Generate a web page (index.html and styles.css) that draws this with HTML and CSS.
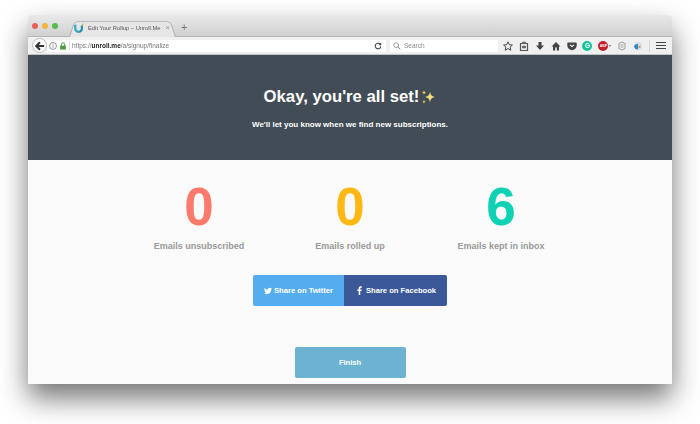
FILE: index.html
```html
<!DOCTYPE html>
<html lang="en">
<head>
      <meta charset="UTF-8">
      <title>Edit Your Rollup - Unroll.Me</title>
      <link rel="stylesheet" href="styles.css">
</head>
<body>
      <div class="window">
            <div class="tabbar">
                  <div class="lights">
                        <span class="light red"></span>
                        <span class="light yellow"></span>
                        <span class="light green"></span>
                  </div>
                  <div class="tab">
                        <svg class="favicon" viewBox="0 0 12 12"><path d="M1.500 2v4.500a4.200 4.200 0 0 0 4.200 4.200" fill="none" stroke="#2fa9c4" stroke-width="2.600"/><path d="M9.500 3v3.500a4 4 0 0 1-3.800 4.200" fill="none" stroke="#1f8fa8" stroke-width="2.600"/><circle cx="10.600" cy="1.600" r="1.100" fill="#f2b632"/></svg>
                        <span class="tab-title">Edit Your Rollup – Unroll.Me</span>
                        <span class="tab-close">×</span>
                  </div>
                  <span class="newtab">+</span>
            </div>
            <div class="toolbar">
                  <div class="back">
                        <svg viewBox="0 0 12 12" width="10" height="10"><path d="M6 1.500 1.500 6 6 10.500M2 6h9" fill="none" stroke="#333" stroke-width="2.400"/></svg>
                  </div>
                  <div class="urlbar">
                        <svg class="ico" viewBox="0 0 10 10" width="8" height="8"><circle cx="5" cy="5" r="4.300" fill="none" stroke="#777"/><path d="M5 4.300v3M5 2.300v1" stroke="#777"/></svg>
                        <svg class="ico" viewBox="0 0 10 10" width="8" height="8"><rect x="1.500" y="4.500" width="7" height="5" fill="#4e9a3c"/><path d="M3 5V3a2 2 0 0 1 4 0v2" fill="none" stroke="#4e9a3c" stroke-width="1.200"/></svg>
                        <span class="sep"></span>
                        <span class="url">https://<b>unroll.me</b>/a/signup/finalize</span>
                        <svg class="reload" viewBox="0 0 10 10" width="8" height="8"><path d="M8.500 5.500a3.500 3.500 0 1 1-1-3" fill="none" stroke="#444" stroke-width="1.400"/><path d="M9 .5v3.500H5.500z" fill="#444"/></svg>
                  </div>
                  <div class="searchbar">
                        <svg viewBox="0 0 10 10" width="8" height="8"><circle cx="4" cy="4" r="3" fill="none" stroke="#888"/><path d="m6.200 6.200 3 3" stroke="#888" stroke-width="1.200"/></svg>
                        <span>Search</span>
                  </div>
                  <div class="tools">
                        <svg viewBox="0 0 10 10" width="10" height="10"><path d="m5 .8 1.300 2.900 3.100.3-2.300 2.100.7 3.100L5 7.600 2.200 9.200l.7-3.100L.6 4l3.100-.3z" fill="none" stroke="#444" stroke-width="1"/></svg>
                        <svg viewBox="0 0 10 10" width="10" height="10"><path d="M1.500 2.500h7v7h-7z" fill="none" stroke="#555" stroke-width="1.200"/><path d="M3.500 2.500V1h3v1.500M3.500 5h3v2h-3z" fill="#777" stroke="#555" stroke-width=".6"/></svg>
                        <svg viewBox="0 0 10 10" width="10" height="10"><path d="M3.500 1h3v3.500H9L5 9 1 4.500h2.500z" fill="#444"/></svg>
                        <svg viewBox="0 0 10 10" width="10" height="10"><path d="M5 1 .5 5.500H2V9.500h2.200V6.500h1.600v3H8V5.500h1.500z" fill="#444"/></svg>
                        <svg viewBox="0 0 10 10" width="10" height="10"><path d="M.8 1.500h8.400a.5.500 0 0 1 .5.500v2.500a4.700 4.700 0 0 1-9.400 0V2a.5.500 0 0 1 .5-.5z" fill="#444"/><path d="M3 3.800 5 5.600l2-1.800" fill="none" stroke="#fff" stroke-width="1.100"/></svg>
                        <span class="grammarly">G</span>
                        <span class="abp"><span class="abp-dot">ABP</span><i class="caret"></i></span>
                        <svg viewBox="0 0 10 10" width="10" height="10"><path d="M2 2.500 5 1l3 1.500v5L5 9 2 7.500z" fill="none" stroke="#a5a5a5" stroke-width="1.100"/><path d="M3.500 4h3M3.500 6h3" stroke="#a5a5a5"/></svg>
                        <svg viewBox="0 0 10 10" width="10" height="10"><circle cx="5" cy="5" r="4" fill="#d6dde3"/><path d="M1 5a4 4 0 0 1 4-2v5.500A4 4 0 0 1 1 5z" fill="#2f86c7"/><circle cx="6.500" cy="6" r="1.100" fill="#d9913a"/></svg>
                        <span class="divider"></span>
                        <span class="burger"><i></i><i></i><i></i></span>
                  </div>
            </div>

            <div class="hero">
                  <h1>Okay, you're all set!
                        <svg class="sparkle" viewBox="0 0 16 16" width="16" height="16"><path d="M10 2.500c.5 3.200 1.300 4.500 4.800 5.500-3.500 1-4.300 2.300-4.800 5.500C9.500 10.300 8.700 9 5.200 8 8.700 7 9.500 5.700 10 2.500z" fill="#f7dc7a"/><path d="M4 1c.2 1.500.7 2 2 2.500-1.300.5-1.800 1-2 2.500-.2-1.500-.7-2-2-2.500 1.300-.5 1.800-1 2-2.500zM4 10.500c.2 1.400.6 1.800 1.800 2.200-1.200.4-1.600.8-1.800 2.300-.2-1.500-.6-1.900-1.800-2.300 1.200-.4 1.600-.8 1.800-2.200z" fill="#f2c84b"/></svg>
                  </h1>
                  <p>We'll let you know when we find new subscriptions.</p>
            </div>

            <div class="content">
                  <div class="stats">
                        <div class="stat">
                              <div class="num coral">0</div>
                              <div class="label">Emails unsubscribed</div>
                        </div>
                        <div class="stat">
                              <div class="num amber">0</div>
                              <div class="label">Emails rolled up</div>
                        </div>
                        <div class="stat">
                              <div class="num teal">6</div>
                              <div class="label">Emails kept in inbox</div>
                        </div>
                  </div>
                  <div class="share">
                        <a class="btn twitter">
                              <svg viewBox="0 0 24 24" width="8" height="8"><path fill="#fff" d="M23.950 4.570a10 10 0 0 1-2.820.770 4.960 4.960 0 0 0 2.160-2.720c-.950.550-2 .950-3.130 1.180a4.920 4.920 0 0 0-8.380 4.480A13.950 13.950 0 0 1 1.640 3.160a4.820 4.820 0 0 0-.660 2.470c0 1.710.870 3.210 2.190 4.100a4.900 4.900 0 0 1-2.230-.620v.060a4.920 4.920 0 0 0 3.950 4.830 5 5 0 0 1-2.210.080 4.940 4.940 0 0 0 4.600 3.420A9.870 9.870 0 0 1 0 19.540a14 14 0 0 0 7.560 2.210c9.050 0 14-7.500 14-13.980 0-.210 0-.420-.020-.630a9.940 9.940 0 0 0 2.460-2.550z"/></svg>
                              Share on Twitter
                        </a>
                        <a class="btn facebook">
                              <svg viewBox="0 0 24 24" width="9" height="9"><path fill="#fff" d="M14 24V13.500h3.500l.6-4.200H14V6.600c0-1.200.4-2 2-2h2.200V.9C17.800.8 16.500.7 15.100.7 12 .7 9.800 2.600 9.800 6.100v3.200H6.300v4.200h3.500V24z"/></svg>
                              Share on Facebook
                        </a>
                  </div>
                  <a class="finish">Finish</a>
            </div>
      </div>
</body>
</html>
```

FILE: styles.css
```css
*{
      box-sizing: border-box;
      margin: 0;
      padding: 0;
}

html, body{
      height: 424px;
      overflow: hidden;
}

body{
      background-color: #fff;
      padding: 15px 28px 0 28px;
      font-family: 'Liberation Sans', Arial, sans-serif;
}

.window{
      height: 369px;
      display: flex;
      flex-direction: column;
      border-radius: 4px 4px 0 0;
      box-shadow: 0 14px 28px rgba(0, 0, 0, 0.55);
      filter: blur(0.3px);
}

.tabbar{
      height: 22px;
      display: flex;
      align-items: flex-end;
      background: linear-gradient(#e9e9e9, #d0d0d0);
      border-radius: 4px 4px 0 0;
      border-bottom: 1px solid #b5b5b5;
}

.lights{
      display: flex;
      gap: 3.500px;
      padding: 0 0 7px 3.500px;
      width: 42px;
}

.light{
      width: 6.500px;
      height: 6.500px;
      border-radius: 50%;
}

.red{ background-color: #e9605a; }
.yellow{ background-color: #eeb73e; }
.green{ background-color: #55bc4a; }

.tab{
      position: relative;
      width: 105px;
      height: 17px;
      display: flex;
      align-items: center;
      gap: 4px;
      padding: 0 5px 0 4px;
}

/* the slanted tab shape sits behind its contents */
.tab::before{
      content: "";
      position: absolute;
      inset: 0 -1px -1px -1px;
      z-index: 0;
      background-color: #e6e6e6;
      border: 1px solid #adadad;
      border-bottom: none;
      border-radius: 5px 5px 0 0;
      transform: perspective(40px) rotateX(14deg);
      transform-origin: bottom;
}

.favicon, .tab-title, .tab-close{
      position: relative;
}

.favicon{
      width: 10px;
      height: 10px;
      flex-shrink: 0;
}

.tab-title{
      font-size: 5.800px;
      color: #555;
      white-space: nowrap;
      flex: 1;
}

.tab-close{
      font-size: 8px;
      color: #999;
}

.newtab{
      font-size: 11px;
      color: #777;
      padding: 0 0 3px 6px;
}

.toolbar{
      height: 18px;
      display: flex;
      align-items: center;
      padding: 0 6px 0 4px;
      background-color: #f0f0f0;
      border-bottom: 1px solid #c4c4c4;
}

.back{
      position: relative;
      width: 15px;
      height: 15px;
      display: flex;
      align-items: center;
      justify-content: center;
      background-color: #fff;
      border: 1px solid #bbb;
      border-radius: 50%;
      flex-shrink: 0;
}

.urlbar{
      width: 339px;
      height: 12px;
      display: flex;
      align-items: center;
      gap: 2px;
      padding: 0 4px 0 2px;
      background-color: #fff;
}

.sep{
      width: 1px;
      height: 9px;
      background-color: #ddd;
}

.url{
      flex: 1;
      font-size: 6.500px;
      color: #777;
}

.url b{
      color: #222;
}

.searchbar{
      width: 108px;
      height: 12px;
      margin-left: 4px;
      display: flex;
      align-items: center;
      gap: 3px;
      padding: 0 3px;
      background-color: #fff;
      font-size: 6.500px;
      color: #888;
}

.tools{
      flex: 1;
      display: flex;
      align-items: center;
      justify-content: space-between;
      padding-left: 5px;
}

.grammarly{
      width: 10px;
      height: 10px;
      border-radius: 50%;
      background-color: #15c39a;
      color: #fff;
      font-size: 6.500px;
      font-weight: bold;
      text-align: center;
      line-height: 10px;
}

.abp{
      display: flex;
      align-items: center;
      gap: 1px;
}

.abp-dot{
      width: 10px;
      height: 10px;
      border-radius: 50%;
      background-color: #c1202c;
      color: #fff;
      font-size: 3.500px;
      font-weight: bold;
      text-align: center;
      line-height: 10px;
}

.caret{
      border: 1.500px solid transparent;
      border-top: 2px solid #666;
      margin-top: 2px;
}

.divider{
      width: 1px;
      height: 12px;
      background-color: #d5d5d5;
}

.burger{
      display: flex;
      flex-direction: column;
      gap: 1.500px;
      width: 10px;
}

.burger i{
      display: block;
      height: 1.500px;
      background-color: #444;
}

.hero{
      height: 105px;
      padding-top: 31px;
      background-color: #424c56;
      color: #fff;
      text-align: center;
}

.hero h1{
      display: flex;
      align-items: center;
      justify-content: center;
      gap: 1px;
      font-size: 16.700px;
      line-height: 22px;
      font-weight: bold;
}

.hero p{
      margin-top: 11px;
      font-size: 8px;
      line-height: 12px;
      font-weight: bold;
}

.content{
      flex: 1;
      background-color: #fafafa;
      display: flex;
      flex-direction: column;
      align-items: center;
      padding-top: 20px;
      overflow: hidden;
}

.stats{
      display: flex;
}

.stat{
      width: 151px;
      text-align: center;
}

.num{
      font-size: 53px;
      line-height: 54px;
      font-weight: bold;
}

.coral{ color: #fb7a6b; }
.amber{ color: #fdb813; }
.teal{ color: #0fd1b3; }

.label{
      margin-top: 6px;
      font-size: 9px;
      line-height: 12px;
      font-weight: bold;
      color: #999;
}

.share{
      display: flex;
      margin-top: 23px;
}

.btn{
      height: 31px;
      display: flex;
      align-items: center;
      justify-content: center;
      gap: 2px;
      color: #fff;
      font-size: 7.600px;
      font-weight: bold;
}

.twitter{
      width: 91px;
      background-color: #55acee;
      border-radius: 2px 0 0 2px;
}

.facebook{
      width: 103px;
      background-color: #3b5998;
      border-radius: 0 2px 2px 0;
}

.finish{
      width: 111px;
      height: 31px;
      margin-top: 41px;
      padding-bottom: 1px;
      display: flex;
      align-items: center;
      justify-content: center;
      background-color: #6cb2d1;
      border-radius: 2px;
      color: #fff;
      font-size: 7.500px;
      font-weight: bold;
}
```
